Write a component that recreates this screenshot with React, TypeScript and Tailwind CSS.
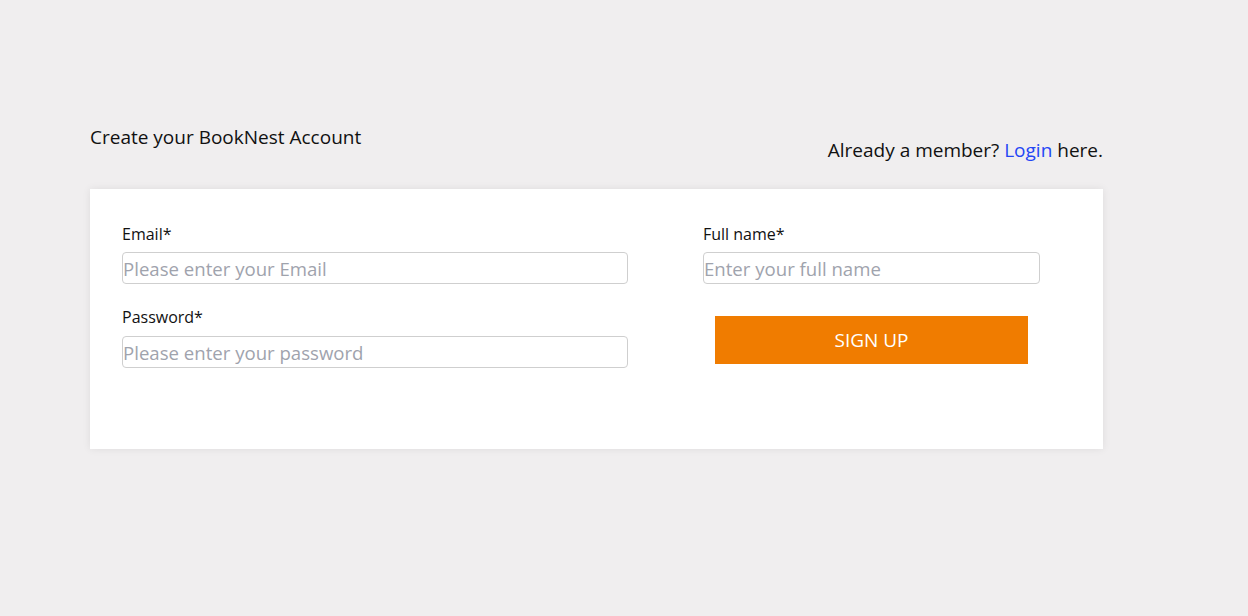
export default function App() {
  return (
    <div
      className="min-h-[616px] w-full bg-[#f0eeef] text-[#111]"
      style={{ fontFamily: '"Open Sans", "Noto Sans", sans-serif' }}
    >
      <div className="ml-[90px] w-[1013px] pt-[124px]">
        <div className="flex items-start justify-between">
          <h1 className="text-[19px] leading-[26px]">Create your BookNest Account</h1>
          <p className="mt-[13px] text-[19px] leading-[26px]">
            Already a member? <a className="text-[#2446f5]">Login</a> here.
          </p>
        </div>

        <div className="mt-[26px] flex h-[260px] bg-white pl-8 pt-[33px] shadow-[0_0_8px_rgba(0,0,0,0.08)]">
          <div className="w-[506px]">
            <label className="block text-[16px] leading-6">Email*</label>
            <input
              className="mt-[6px] h-8 w-full rounded border border-[#cfcfcf] px-0 text-[18.6px] placeholder:text-[#9fa3ad] outline-none"
              placeholder="Please enter your Email"
            />
            <label className="mt-[21px] block text-[16px] leading-6">Password*</label>
            <input
              type="password"
              className="mt-[7px] h-8 w-full rounded border border-[#cfcfcf] px-0 text-[18.6px] placeholder:text-[#9fa3ad] outline-none"
              placeholder="Please enter your password"
            />
          </div>

          <div className="ml-[75px] w-[337px]">
            <label className="block text-[16px] leading-6">Full name*</label>
            <input
              className="mt-[6px] h-8 w-full rounded border border-[#cfcfcf] px-0 text-[18.6px] placeholder:text-[#9fa3ad] outline-none"
              placeholder="Enter your full name"
            />
            <div className="mt-8 flex justify-center">
              <button className="h-12 w-[313px] bg-[#f07c00] text-[19px] text-white">SIGN UP</button>
            </div>
          </div>
        </div>
      </div>
    </div>
  )
}
